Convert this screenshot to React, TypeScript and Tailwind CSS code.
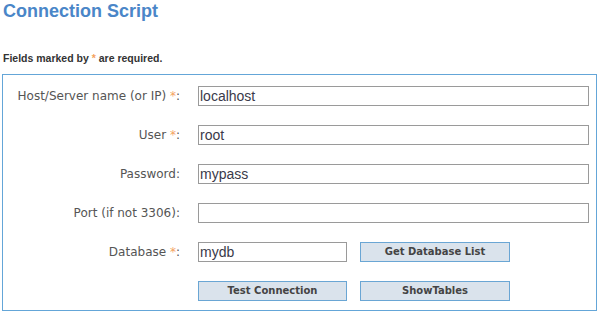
import React from "react";

const Star = () => <span className="text-[#f4a261]">*</span>;

function Row({ label, req, children }: { label: string; req?: boolean; children: React.ReactNode }) {
  return (
    <div className="flex items-center h-[20px] mb-[19px]">
      <div className="w-[177px] text-right text-[12px] leading-[14px] text-[#555] font-['DejaVu_Sans',sans-serif]">
        {label}
        {req ? <> <Star /></> : null}:
      </div>
      <div className="ml-[18px] flex items-center">{children}</div>
    </div>
  );
}

function Input({ value, w }: { value: string; w: string }) {
  return (
    <input
      readOnly
      value={value}
      className={`${w} block h-[20px] border border-[#9a9a9a] bg-white pl-[1px] text-[14px] text-[#3a3a4a] font-['Liberation_Sans',Arial,sans-serif] outline-none`}
    />
  );
}

function Btn({ children, cls }: { children: React.ReactNode; cls: string }) {
  return (
    <button className={`${cls} block h-[20px] border border-[#6aa6d4] bg-[#dae3ec] text-[10px] font-bold text-[#444] font-['DejaVu_Sans',sans-serif] leading-[18px]`}>
      {children}
    </button>
  );
}

export default function App() {
  return (
    <div className="w-[600px] h-[312px] bg-white overflow-hidden">
      <h1 className="pl-[3px] h-[22px] text-[18px] leading-[22px] font-bold text-[#4a86c8] font-['Liberation_Sans',Arial,sans-serif]">
        Connection Script
      </h1>
      <p className="mt-[30px] pl-[3px] h-[13px] text-[10.5px] leading-[13px] font-bold text-[#333] font-['Liberation_Sans',Arial,sans-serif]">
        Fields marked by <Star /> are required.
      </p>
      <div className="ml-[2px] mt-[9px] w-[595px] h-[237px] border border-[#64a6d8] pt-[11px]">
        <Row label="Host/Server name (or IP)" req>
          <Input value="localhost" w="w-[391px]" />
        </Row>
        <Row label="User" req>
          <Input value="root" w="w-[391px]" />
        </Row>
        <Row label="Password">
          <Input value="mypass" w="w-[391px]" />
        </Row>
        <Row label="Port (if not 3306)">
          <Input value="" w="w-[391px]" />
        </Row>
        <Row label="Database" req>
          <Input value="mydb" w="w-[149px]" />
          <Btn cls="w-[150px] ml-[13px]">Get Database List</Btn>
        </Row>
        <div className="flex items-center h-[20px] ml-[195px]">
          <Btn cls="w-[149px]">Test Connection</Btn>
          <Btn cls="w-[150px] ml-[13px]">ShowTables</Btn>
        </div>
      </div>
    </div>
  );
}
